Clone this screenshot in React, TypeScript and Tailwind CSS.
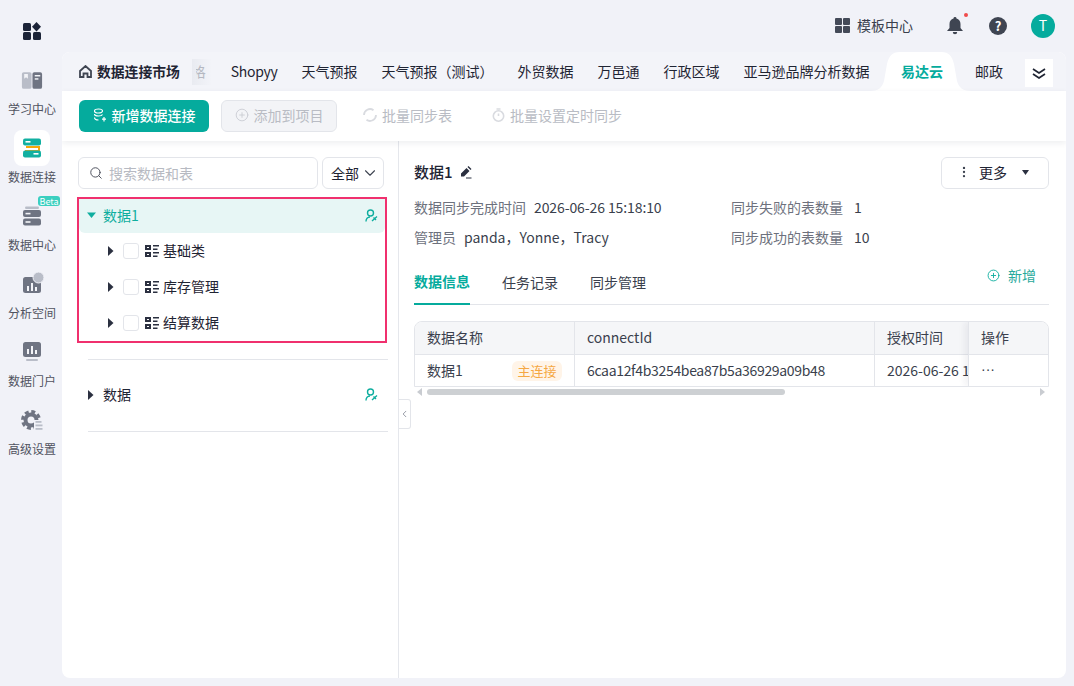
import { ChevronDown, ChevronLeft, CirclePlus, EllipsisVertical, Search } from "lucide-react";

const TABS = ["Shopyy", "天气预报", "天气预报（测试）", "外贸数据", "万邑通", "行政区域", "亚马逊品牌分析数据"];
const TREE = ["基础类", "库存管理", "结算数据"];

function LearnIcon() {
  return (
    <svg width="22" height="19" viewBox="0 0 24 20">
      <rect x="1" y="1" width="10.5" height="18" rx="2" fill="#b9bdc8" />
      <rect x="12.5" y="1" width="10.5" height="18" rx="2" fill="#6f7482" />
      <path d="M3.5 3h4v5l-2-1.5-2 1.5z" fill="#f3f4f8" />
      <rect x="15" y="4" width="6" height="1.6" fill="#f3f4f8" />
      <rect x="15" y="7.5" width="4" height="1.6" fill="#f3f4f8" />
    </svg>
  );
}

function ConnectIcon() {
  return (
    <svg width="20" height="20" viewBox="0 0 20 20">
      <path d="M4 9h13v4H3" fill="none" stroke="#f6a609" strokeWidth="2" />
      <rect x="1" y="0.5" width="18" height="7" rx="2" fill="#12b0a1" />
      <rect x="1" y="12.5" width="18" height="7" rx="2" fill="#12b0a1" />
      <rect x="3.5" y="3" width="5" height="1.6" fill="#fff" />
      <rect x="11.5" y="15" width="5" height="1.6" fill="#fff" />
    </svg>
  );
}

function ServerIcon() {
  return (
    <svg width="20" height="20" viewBox="0 0 20 20">
      <rect x="3" y="0.5" width="14" height="2.5" rx="1.2" fill="#b9bdc8" />
      <rect x="1" y="4" width="18" height="7" rx="2" fill="#6f7482" />
      <rect x="1" y="12.5" width="18" height="7" rx="2" fill="#6f7482" />
      <rect x="3.5" y="6.8" width="5" height="1.6" fill="#f3f4f8" />
      <rect x="3.5" y="15.2" width="5" height="1.6" fill="#f3f4f8" />
    </svg>
  );
}

function AnalysisIcon() {
  return (
    <svg width="24" height="24" viewBox="0 0 24 24">
      <rect x="3" y="5" width="18" height="16" rx="2.5" fill="#6f7482" />
      <circle cx="18.500" cy="5.500" r="5.500" fill="#b9bdc8" stroke="#f1f2f8" strokeWidth="1" />
      <rect x="7" y="14" width="2" height="5" fill="#f3f4f8" />
      <rect x="11" y="11" width="2" height="8" fill="#f3f4f8" />
      <rect x="15" y="15" width="2" height="4" fill="#f3f4f8" />
    </svg>
  );
}

function PortalIcon() {
  return (
    <svg width="20" height="20" viewBox="0 0 20 20">
      <rect x="1" y="0" width="18" height="15" rx="2.5" fill="#6f7482" />
      <rect x="4" y="17" width="12" height="2" rx="1" fill="#b9bdc8" />
      <rect x="5" y="7" width="2" height="5" fill="#f3f4f8" />
      <rect x="9" y="4" width="2" height="8" fill="#f3f4f8" />
      <rect x="13" y="8" width="2" height="4" fill="#f3f4f8" />
    </svg>
  );
}

function GearIcon() {
  return (
    <svg width="22" height="22" viewBox="0 0 22 22">
      <circle cx="10" cy="11" r="8.500" fill="none" stroke="#6f7482" strokeWidth="3" strokeDasharray="4 2.680" />
      <circle cx="10" cy="11" r="5.500" fill="none" stroke="#6f7482" strokeWidth="4" />
      <rect x="13" y="11" width="9" height="11" fill="#f1f2f8" />
      <rect x="14.500" y="12" width="6" height="1.800" fill="#b9bdc8" />
      <rect x="14.500" y="15.500" width="7" height="1.800" fill="#b9bdc8" />
      <rect x="14.500" y="19" width="7" height="1.800" fill="#b9bdc8" />
    </svg>
  );
}

function TreeNodeIcon() {
  return (
    <svg width="14" height="14" viewBox="0 0 14 14" fill="#2b3040">
      <path d="M0 1h6v5H0zM2 3v1h2V3zM0 8h6v5H0zM2 10v1h2v-1z" fillRule="evenodd" />
      <rect x="8" y="1" width="6" height="1.500" />
      <rect x="8" y="4.500" width="4.500" height="1.500" />
      <rect x="8" y="8" width="6" height="1.500" />
      <rect x="8" y="11.500" width="4.500" height="1.500" />
    </svg>
  );
}

function OwnerIcon() {
  return (
    <svg width="13" height="13" viewBox="0 0 13 13" fill="none" stroke="#0fae9f" strokeWidth="1.400">
      <circle cx="5.500" cy="4" r="3" />
      <path d="M1 12.500c0-2.500 1.500-4.500 4-4.500" />
      <path d="M7 12l5-4.500M8.500 8.500l2.500 2.500" />
    </svg>
  );
}

function Caret({ open = false, color = "#2b3040" }: { open?: boolean; color?: string }) {
  return (
    <svg width="9" height="10" viewBox="0 0 9 10" fill={color}>
      {open ? <path d="M0 2.500h9L4.500 8z" /> : <path d="M2 0l5.500 5L2 10z" />}
    </svg>
  );
}

function SideItem({ label, active, beta, children }: { label: string; active?: boolean; beta?: boolean; children: React.ReactNode }) {
  return (
    <div className="relative flex h-[68px] w-[60px] flex-col items-center">
      <div className={`flex h-9 w-9 items-center justify-center rounded-lg ${active ? "bg-white" : ""}`}>{children}</div>
      <div className="mt-[2px] text-[12px] leading-[17px] text-[#50535f]">{label}</div>
      {beta && (
        <div className="absolute left-[36px] top-[-2px] flex h-[10px] w-[22px] items-center justify-center rounded-[3px] bg-[#3bcfc0] text-[9px] leading-none text-white">Beta</div>
      )}
    </div>
  );
}

export default function App() {
  return (
    <div className="flex h-screen w-full overflow-hidden bg-[#f1f2f8] font-['Noto_Sans_CJK_SC',sans-serif] text-[14px] text-[#1f2433]">
      <aside className="flex w-[62px] shrink-0 flex-col items-center pl-[2px]">
        <svg className="mt-[22px] mb-[22px]" width="18" height="18" viewBox="0 0 18 18" fill="#1c2438">
          <rect x="0" y="1" width="8" height="8" rx="1.500" />
          <path d="M13.500 0l4.500 4.800-4.500 4.800L9 4.800z" />
          <rect x="0" y="10" width="8" height="8" rx="1.500" />
          <rect x="10" y="10" width="8" height="8" rx="1.500" />
        </svg>
        <SideItem label="学习中心"><LearnIcon /></SideItem>
        <SideItem label="数据连接" active><ConnectIcon /></SideItem>
        <SideItem label="数据中心" beta><ServerIcon /></SideItem>
        <SideItem label="分析空间"><AnalysisIcon /></SideItem>
        <SideItem label="数据门户"><PortalIcon /></SideItem>
        <SideItem label="高级设置"><GearIcon /></SideItem>
      </aside>

      <div className="flex min-w-0 flex-1 flex-col pr-2 pb-2">
        <header className="flex h-[52px] shrink-0 items-center justify-end pr-[11px] pb-[1px]">
          <svg width="15" height="15" viewBox="0 0 15 15" fill="#444a58">
            <rect width="7" height="7" rx="1" />
            <rect x="8" width="7" height="7" rx="1" />
            <rect y="8" width="7" height="7" rx="1" />
            <rect x="8" y="8" width="7" height="7" rx="1" />
          </svg>
          <span className="ml-[7px] text-[#3a3f4d]">模板中心</span>
          <div className="relative ml-[34px] h-[18px] w-4">
            <svg width="16" height="18" viewBox="0 0 16 18" fill="#3f4552">
              <path d="M8 0a1.500 1.500 0 0 1 1.500 1.600C12 2.300 13.500 4.500 13.500 7v4L16 14H0l2.500-3V7C2.500 4.500 4 2.300 6.500 1.600A1.500 1.500 0 0 1 8 0zM5.800 15h4.400a2.200 2.200 0 0 1-4.400 0z" />
            </svg>
            <span className="absolute -top-[4px] left-[17px] h-1 w-1 rounded-full bg-[#f04b4b]" />
          </div>
          <div className="ml-[26px] flex h-[18px] w-[18px] items-center justify-center rounded-full bg-[#3f4552] text-[13px] font-bold leading-none text-white">?</div>
          <div className="ml-[24px] flex h-6 w-6 items-center justify-center rounded-full bg-[#05ab9d] text-[14px] text-white">T</div>
        </header>

        <main className="flex min-h-0 flex-1 flex-col overflow-hidden rounded-lg bg-white">
          <div className="relative flex h-[39px] shrink-0 items-center overflow-hidden bg-[#f3f4f9] pl-[17px]">
            <svg className="mr-[5px]" width="13" height="13" viewBox="0 0 13 13" fill="none" stroke="#3f4552" strokeWidth="1.800">
              <path d="M1 6l5.500-5L12 6v6H8.500V8.500h-4V12H1z" />
            </svg>
            <span className="text-[13.800px] font-semibold">数据连接市场</span>
            <span className="ml-3 flex h-[26px] w-[20px] items-center justify-end bg-gradient-to-r from-[#e9ebf1] to-[#f3f4f9] pr-[6px] text-[#b5b8c1]">
              <span className="block w-[10px] overflow-hidden whitespace-nowrap">
                <span className="-ml-[4px] block">格</span>
              </span>
            </span>
            <div className="ml-[19px] flex items-center gap-6 whitespace-nowrap">
              {TABS.map((t) => (
                <span key={t} className={t === "Shopyy" ? "tracking-[-0.3px]" : ""}>{t}</span>
              ))}
            </div>
            <svg className="absolute left-[808px] top-0" width="102" height="39" viewBox="0 0 102 39" fill="#fff">
              <path d="M0 39c8 0 12-3 14-10l3-17C19 4 22 0 30 0h41c8 0 11 4 13 12l3 17c2 7 6 10 15 10z" />
            </svg>
            <span className="absolute left-[839px] z-10 font-semibold text-[#05ab9d]">易达云</span>
            <span className="absolute left-[913px] z-10">邮政</span>
            <div className="absolute left-[963px] top-[7px] z-10 flex h-7 w-7 items-center justify-center bg-white">
              <svg width="14" height="11" viewBox="0 0 14 11" fill="none" stroke="#1f2433" strokeWidth="1.700">
                <path d="M1 1l6 4 6-4M1 6l6 4 6-4" />
              </svg>
            </div>
          </div>

          <div className="z-10 flex h-[50px] shrink-0 items-center bg-white pl-[17px] shadow-[0_2px_6px_rgba(30,40,70,0.08)]">
            <button className="flex h-8 w-[130px] items-center justify-center gap-[5px] rounded-md bg-[#05ab9d] pb-[2px] font-medium text-white">
              <svg width="14" height="14" viewBox="0 0 14 14" fill="none" stroke="#fff" strokeWidth="1.200">
                <ellipse cx="5.500" cy="3" rx="4" ry="2" />
                <path d="M9.500 6.500c-.5 1-2 1.500-4 1.500s-4-.5-4-2M1.500 9.500c0 1.500 2 2.500 4 2.500M11 9v4.500M9 11.200h4" />
              </svg>
              新增数据连接
            </button>
            <button className="ml-3 flex h-8 w-[116px] items-center justify-center gap-[5px] rounded-md border border-[#e3e5ea] bg-[#f3f4f7] pb-[2px] text-[#b9bcc4]">
              <CirclePlus size={14} strokeWidth={1.500} color="#c9cbd2" />
              添加到项目
            </button>
            <span className="ml-[26px] flex items-center gap-[5px] pb-[2px] text-[#b9bcc4]">
              <svg width="14" height="14" viewBox="0 0 14 14" fill="none" stroke="#d9dbe0" strokeWidth="1.800">
                <path d="M10.500 2.200A6 6 0 0 0 1 7M3.500 11.800A6 6 0 0 0 13 7" />
              </svg>
              批量同步表
            </span>
            <span className="ml-[40px] flex items-center gap-[5px] pb-[2px] text-[#b9bcc4]">
              <svg width="13" height="14" viewBox="0 0 13 14" fill="none" stroke="#d9dbe0" strokeWidth="1.600">
                <circle cx="6.500" cy="8" r="5.200" />
                <path d="M4.500 1h4M6.500 5.500V8" />
              </svg>
              批量设置定时同步
            </span>
          </div>

          <div className="flex min-h-0 flex-1">
            <section className="flex w-[337px] shrink-0 flex-col border-r border-[#e5e7ec] pt-4 pl-[15px] pr-[10px]">
              <div className="flex h-8 gap-1 pl-px pr-[4px]">
                <div className="flex w-[240px] shrink-0 items-center gap-[6px] rounded-md border border-[#e3e5ea] pl-[10px]">
                  <Search size={14} strokeWidth={1.700} color="#50535f" />
                  <span className="text-[#b7bac2]">搜索数据和表</span>
                </div>
                <div className="flex w-[62px] shrink-0 items-center justify-between rounded-md border border-[#e3e5ea] pl-2 pr-[4px]">
                  全部
                  <ChevronDown size={18} strokeWidth={1.500} color="#3f4552" />
                </div>
              </div>

              <div className="mt-2 h-[146px] w-[310px] border-2 border-[#f0306e]">
                <div className="flex h-[34px] items-center rounded-b-md bg-[#e7f6f5] pb-[2px] pl-2 pr-[7px]">
                  <Caret open color="#0fae9f" />
                  <span className="ml-[7px] text-[#0fae9f]">数据1</span>
                  <span className="ml-auto flex"><OwnerIcon /></span>
                </div>
                {TREE.map((name) => (
                  <div key={name} className="flex h-9 items-center pl-[27px]">
                    <Caret />
                    <span className="ml-[8px] h-4 w-4 rounded-[3px] border border-[#e3e5ea] bg-white" />
                    <span className="ml-[6px] flex"><TreeNodeIcon /></span>
                    <span className="ml-[4px] pb-[2px]">{name}</span>
                  </div>
                ))}
              </div>

              <div className="mt-4 ml-[11px] w-[300px] border-t border-[#e3e5ea]" />
              <div className="ml-[11px] flex h-[72px] w-[300px] items-center border-b border-[#e3e5ea] pb-[2px] pr-[10px]">
                <span className="-ml-[2px] flex"><Caret /></span>
                <span className="ml-[8px]">数据</span>
                <span className="ml-auto flex"><OwnerIcon /></span>
              </div>
            </section>

            <section className="relative min-w-0 flex-1 pt-4 pl-[15px] pr-[17px]">
              <div className="absolute left-0 top-[258px] flex h-[30px] w-[12px] items-center justify-center rounded-r-[3px] border border-l-0 border-[#e3e5ea] bg-white">
                <ChevronLeft size={12} strokeWidth={1.500} color="#6b7080" />
              </div>

              <div className="flex h-8 items-center justify-between">
                <div className="flex items-center gap-[6px] pb-[2px]">
                  <span className="text-[15px] font-medium">数据1</span>
                  <svg width="13" height="13" viewBox="0 0 13 13" fill="#2b3040">
                    <path d="M7.500 2l3 3-5.500 5.500H2v-3zM8.500 1l1-1 3 3-1 1zM7 11.500h5.500v1H7z" />
                  </svg>
                </div>
                <button className="flex h-8 w-[108px] items-center rounded-md border border-[#e3e5ea] pb-[2px] pl-[15px]">
                  <EllipsisVertical size={14} color="#3f4552" />
                  <span className="ml-[8px] mr-[15px]">更多</span>
                  <svg width="7" height="5" viewBox="0 0 7 5" fill="#2b3040"><path d="M0 0h7L3.500 5z" /></svg>
                </button>
              </div>

              <div className="mt-[3px] grid grid-cols-[317px_1fr] text-[#6d717d]">
                <div className="flex h-[30px] items-center">数据同步完成时间<span className="ml-2 tracking-[-0.1px] text-[#3a3f4d]">2026-06-26 15:18:10</span></div>
                <div className="flex h-[30px] items-center">同步失败的表数量<span className="ml-[11px] text-[#3a3f4d]">1</span></div>
                <div className="flex h-[30px] items-center">管理员<span className="ml-2 text-[#3a3f4d]">panda，Yonne，Tracy</span></div>
                <div className="flex h-[30px] items-center">同步成功的表数量<span className="ml-[11px] text-[#3a3f4d]">10</span></div>
              </div>

              <div className="relative mt-[9px] flex h-[44px] gap-8 border-b border-[#e3e5ea]">
                <span className="flex h-[44px] items-center border-b-2 border-[#05ab9d] pb-[2px] font-semibold text-[#05ab9d]">数据信息</span>
                <span className="flex h-[44px] items-center pb-[2px] text-[#3a3f4d]">任务记录</span>
                <span className="flex h-[44px] items-center pb-[2px] text-[#3a3f4d]">同步管理</span>
                <span className="absolute right-[13px] top-0 flex h-[28px] items-center gap-[8px] text-[#27a99c]">
                  <CirclePlus size={13} strokeWidth={1.700} color="#0fae9f" />
                  新增
                </span>
              </div>

              <div className="mt-4 flex h-[66px] overflow-hidden rounded-t-lg border border-[#e3e5ea] text-[#3a3f4d]">
                <div className="w-[160px] shrink-0 border-r border-[#e3e5ea]">
                  <div className="flex h-[33px] items-center border-b border-[#e3e5ea] bg-[#f5f6f8] pb-[2px] pl-3">数据名称</div>
                  <div className="flex h-[31px] items-center justify-between pl-3 pr-3">
                    数据1
                    <span className="flex h-[20px] w-[50px] items-center justify-center rounded-md bg-[#fff4e8] text-[13px] text-[#f5a742]">主连接</span>
                  </div>
                </div>
                <div className="w-[300px] shrink-0 border-r border-[#e3e5ea]">
                  <div className="flex h-[33px] items-center border-b border-[#e3e5ea] bg-[#f5f6f8] pb-[2px] pl-3">connectId</div>
                  <div className="flex h-[31px] items-center pl-3 tracking-[-0.33px]">6caa12f4b3254bea87b5a36929a09b48</div>
                </div>
                <div className="w-[93px] shrink-0 overflow-hidden whitespace-nowrap">
                  <div className="flex h-[33px] items-center border-b border-[#e3e5ea] bg-[#f5f6f8] pb-[2px] pl-3">授权时间</div>
                  <div className="flex h-[31px] items-center pl-3">2026-06-26 1</div>
                </div>
                <div className="flex-1 border-l border-[#e3e5ea] shadow-[-4px_0_6px_rgba(30,40,70,0.06)]">
                  <div className="flex h-[33px] items-center border-b border-[#e3e5ea] bg-[#f5f6f8] pb-[2px] pl-3">操作</div>
                  <div className="flex h-[28px] items-center bg-white pl-3 font-['Liberation_Sans',sans-serif]">···</div>
                </div>
              </div>
              <div className="flex h-[10px] items-center border-x border-transparent">
                <svg className="ml-[2px]" width="6" height="8" viewBox="0 0 6 8" fill="#c9ccd1"><path d="M5 0v8L0 4z" /></svg>
                <div className="ml-[4px] h-[6px] w-[358px] rounded-full bg-[#cdd0d3]" />
                <svg className="ml-auto mr-[2px]" width="6" height="8" viewBox="0 0 6 8" fill="#c9ccd1"><path d="M0 0v8l5-4z" /></svg>
              </div>
            </section>
          </div>
        </main>
      </div>
    </div>
  );
}
